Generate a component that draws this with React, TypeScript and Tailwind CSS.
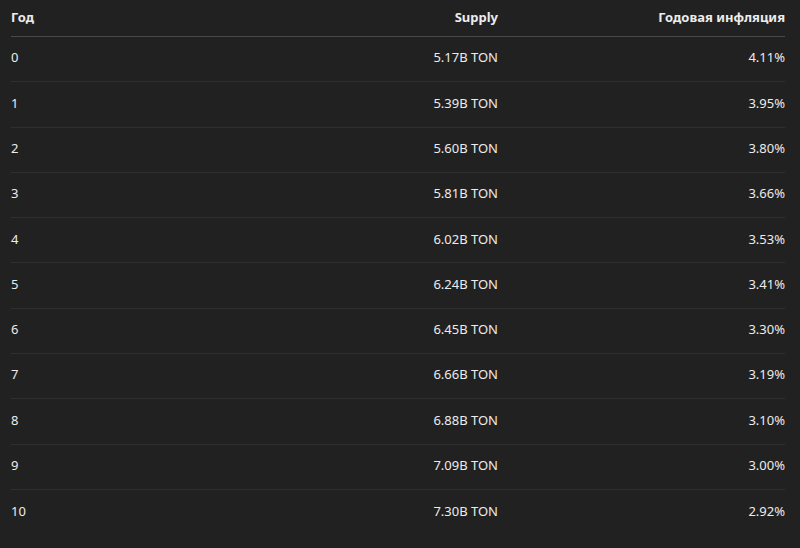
const rows = [
  ['0', '5.17B TON', '4.11%'],
  ['1', '5.39B TON', '3.95%'],
  ['2', '5.60B TON', '3.80%'],
  ['3', '5.81B TON', '3.66%'],
  ['4', '6.02B TON', '3.53%'],
  ['5', '6.24B TON', '3.41%'],
  ['6', '6.45B TON', '3.30%'],
  ['7', '6.66B TON', '3.19%'],
  ['8', '6.88B TON', '3.10%'],
  ['9', '7.09B TON', '3.00%'],
  ['10', '7.30B TON', '2.92%'],
];

export default function App() {
  return (
    <div
      className="w-[800px] h-[548px] bg-[#212121] text-[#ececec] px-[11px] pr-[15px] overflow-hidden"
      style={{ fontFamily: '"Noto Sans", "Open Sans", sans-serif' }}
    >
      <div className="grid grid-cols-[200px_287px_1fr] h-[37px] pb-[1px] items-center border-b border-[#4a4a4a] text-[13px] font-bold">
        <div>Год</div>
        <div className="text-right">Supply</div>
        <div className="text-right">Годовая инфляция</div>
      </div>
      {rows.map((r, i) => (
        <div
          key={i}
          className={`grid grid-cols-[200px_287px_1fr] h-[45.3px] pb-[2px] items-center text-[13px] ${
            i < rows.length - 1 ? 'border-b border-[#2f2f2f]' : ''
          }`}
        >
          <div>{r[0]}</div>
          <div className="text-right">{r[1]}</div>
          <div className="text-right">{r[2]}</div>
        </div>
      ))}
    </div>
  );
}
